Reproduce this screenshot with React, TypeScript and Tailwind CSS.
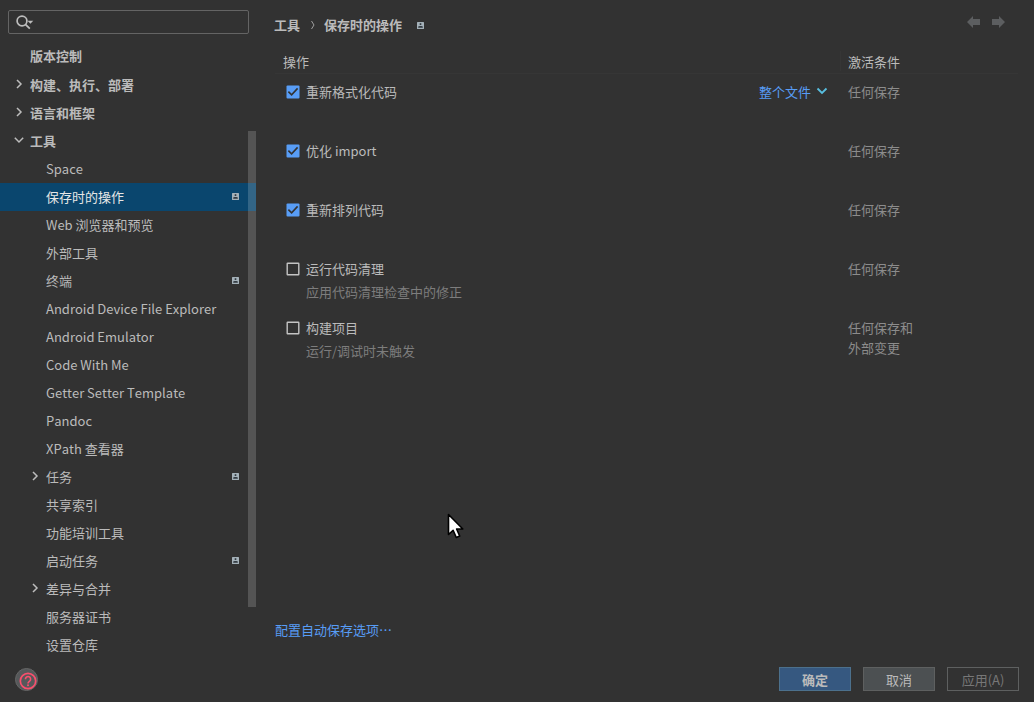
import React, { useState } from "react";
import clsx from "clsx";

interface TreeItem {
  label: string;
  level: number;
  arrow?: "right" | "down";
  project?: boolean;
}

interface SaveAction {
  label: string;
  checked: boolean;
  hint?: string;
  scope?: string;
  trigger: string[];
}

const treeItems: TreeItem[] = [
  { label: "版本控制", level: 0 },
  { label: "构建、执行、部署", level: 0, arrow: "right" },
  { label: "语言和框架", level: 0, arrow: "right" },
  { label: "工具", level: 0, arrow: "down" },
  { label: "Space", level: 1 },
  { label: "保存时的操作", level: 1, project: true },
  { label: "Web 浏览器和预览", level: 1 },
  { label: "外部工具", level: 1 },
  { label: "终端", level: 1, project: true },
  { label: "Android Device File Explorer", level: 1 },
  { label: "Android Emulator", level: 1 },
  { label: "Code With Me", level: 1 },
  { label: "Getter Setter Template", level: 1 },
  { label: "Pandoc", level: 1 },
  { label: "XPath 查看器", level: 1 },
  { label: "任务", level: 1, arrow: "right", project: true },
  { label: "共享索引", level: 1 },
  { label: "功能培训工具", level: 1 },
  { label: "启动任务", level: 1, project: true },
  { label: "差异与合并", level: 1, arrow: "right" },
  { label: "服务器证书", level: 1 },
  { label: "设置仓库", level: 1 },
];

const initialActions: SaveAction[] = [
  { label: "重新格式化代码", checked: true, scope: "整个文件", trigger: ["任何保存"] },
  { label: "优化 import", checked: true, trigger: ["任何保存"] },
  { label: "重新排列代码", checked: true, trigger: ["任何保存"] },
  { label: "运行代码清理", checked: false, hint: "应用代码清理检查中的修正", trigger: ["任何保存"] },
  { label: "构建项目", checked: false, hint: "运行/调试时未触发", trigger: ["任何保存和", "外部变更"] },
];

function ProjectIcon() {
  return (
    <svg width="7" height="7" viewBox="0 0 7 7" className="mb-px shrink-0">
      <rect width="7" height="7" rx="0.5" fill="#a4b1b9" />
      <rect x="2.7" y="1.2" width="1.6" height="1.8" fill="#323a40" />
      <path d="M1.2 5.8V4.6L2.6 4h1.8l1.4.6v1.2z" fill="#323a40" />
    </svg>
  );
}

function Arrow({ direction }: { direction: "right" | "down" }) {
  return (
    <svg width="12" height="12" viewBox="0 0 12 12" fill="none" stroke="#bdbdbd" strokeWidth="1.5">
      {direction === "right" ? <path d="M4 2l4 4-4 4" /> : <path d="M1.8 3.8L6 8l4.2-4.2" />}
    </svg>
  );
}

function Checkbox({ checked, onClick }: { checked: boolean; onClick: () => void }) {
  return (
    <button onClick={onClick} className="h-[14px] w-[14px] shrink-0">
      <svg width="14" height="14" viewBox="0 0 14 14" fill="none">
        {checked ? (
          <>
            <rect x="0.5" y="0.5" width="13" height="13" rx="1" fill="#589df6" />
            <path d="M2.4 6.6l3.2 3.2 6-6.4" stroke="#323232" strokeWidth="1.6" />
          </>
        ) : (
          <rect x="1.2" y="1.2" width="11.6" height="11.6" rx="0.5" stroke="#c4c4c4" strokeWidth="1.4" />
        )}
      </svg>
    </button>
  );
}

function SearchField() {
  return (
    <div className="mx-2 mt-[10px] flex h-6 w-[241px] shrink-0 items-center rounded-[2px] border border-[#646464] pl-[7px]">
      <svg width="18" height="16" viewBox="0 0 18 16" fill="none" className="mb-px">
        <circle cx="6" cy="7" r="4.9" stroke="#bdbdbd" strokeWidth="1.7" />
        <path d="M9.4 10.4l4.4 4.2" stroke="#bdbdbd" strokeWidth="1.8" />
        <path d="M11.5 6.8h5.8l-2.9 2.9z" fill="#bdbdbd" />
      </svg>
    </div>
  );
}

function Sidebar() {
  const [selected, setSelected] = useState("保存时的操作");

  return (
    <div className="flex h-[659px] w-64 shrink-0 flex-col">
      <SearchField />
      <div className="relative mt-[9px]">
        {treeItems.map((item) => (
          <div
            key={item.label}
            onClick={() => setSelected(item.label)}
            className={clsx(
              "flex h-7 items-center pr-[17px] first:pb-0.5",
              item.level === 0 ? "pl-[13px] font-semibold" : "pl-[29px]",
              selected === item.label && "bg-[#0a466e] text-[#e6e6e6]"
            )}
          >
            <span className="mr-[3px] h-[14px] w-[14px] shrink-0">
              {item.arrow && <Arrow direction={item.arrow} />}
            </span>
            <span className="flex-1 whitespace-nowrap">{item.label}</span>
            {item.project && <ProjectIcon />}
          </div>
        ))}
        <div className="absolute top-[88px] right-0 h-[476px] w-2 bg-white/17" />
      </div>
    </div>
  );
}

function Breadcrumbs() {
  return (
    <div className="flex h-[51px] items-center pl-[18px] font-semibold">
      <span className="mb-[2px]">工具</span>
      <svg width="6" height="10" viewBox="0 0 6 10" fill="none" stroke="#a0a0a0" className="mr-2 mb-px ml-[10px]">
        <path d="M1.5 1l2.5 4-2.5 4" />
      </svg>
      <span className="mr-[15px] mb-[2px]">保存时的操作</span>
      <ProjectIcon />
      <div className="mr-[29px] mb-[7px] ml-auto flex gap-3 text-[#5c5e60]">
        <svg width="13" height="12" viewBox="0 0 13 12" fill="currentColor">
          <path d="M0 6l6-6v3h7v6H6v3z" />
        </svg>
        <svg width="13" height="12" viewBox="0 0 13 12" fill="currentColor">
          <path d="M13 6L7 0v3H0v6h7v3z" />
        </svg>
      </div>
    </div>
  );
}

function ActionTable() {
  const [actions, setActions] = useState(initialActions);

  const toggle = (index: number) => {
    setActions((prev) => prev.map((a, i) => (i === index ? { ...a, checked: !a.checked } : a)));
  };

  return (
    <div className="mr-4 ml-[19px]">
      <div className="flex h-[23px] items-start border-b border-[#363636]">
        <div className="h-5 flex-1 border-r border-[#363636] pl-2 leading-[22px]">操作</div>
        <div className="w-[177px] pl-[7px] leading-[22px]">激活条件</div>
      </div>
      {actions.map((action, index) => (
        <div key={action.label} className="flex h-[59px] pt-2 leading-5">
          <div className="flex-1 pl-[11px]">
            <div className="flex items-center">
              <Checkbox checked={action.checked} onClick={() => toggle(index)} />
              <span className="ml-[6px]">{action.label}</span>
              {action.scope && (
                <div className="mr-[13px] ml-auto flex items-center text-[#589df6]">
                  <span>{action.scope}</span>
                  <svg width="12" height="8" viewBox="0 0 12 8" fill="none" className="mb-[2px] ml-[5px]">
                    <path d="M1.5 1.5L6 6l4.5-4.5" stroke="#58bfe0" strokeWidth="1.8" />
                  </svg>
                </div>
              )}
            </div>
            {action.hint && <div className="mt-[3px] pl-5 text-[#7d7d7d]">{action.hint}</div>}
          </div>
          <div className="w-[177px] pl-[7px] text-[#8c8c8c]">
            {action.trigger.map((line) => (
              <div key={line}>{line}</div>
            ))}
          </div>
        </div>
      ))}
    </div>
  );
}

function Footer() {
  return (
    <div className="flex h-[43px] items-start pr-[15px] pl-[15px]">
      <svg width="24" height="24" viewBox="0 0 24 24" fill="none" className="mt-[9px]">
        <circle cx="11.5" cy="11.5" r="11" fill="#55585a" stroke="#666666" />
        <circle cx="13" cy="13" r="7.7" stroke="#f94f6d" strokeWidth="1.7" />
        <path d="M10.4 11.2a2.6 2.6 0 1 1 4.2 2c-1 .8-1.6 1-1.6 2.2" stroke="#f94f6d" strokeWidth="1.6" />
        <circle cx="13" cy="17.2" r="1" fill="#f94f6d" />
      </svg>
      <div className="mt-2 ml-auto flex gap-3">
        <button className="h-6 w-[72px] border border-[#4c708c] bg-[#365880] pt-px font-semibold">确定</button>
        <button className="h-6 w-[72px] border border-[#5e6060] bg-[#4c5052] pt-px">取消</button>
        <button className="h-6 w-[72px] border border-[#5e6060] pt-px text-[#777777]">应用(A)</button>
      </div>
    </div>
  );
}

function App() {
  return (
    <div className="relative h-[702px] w-[1034px] overflow-hidden bg-[#323232] font-['Noto_Sans_CJK_SC',sans-serif] text-[13px] leading-5 text-[#bbbbbb] [font-kerning:none]">
      <div className="flex h-[659px]">
        <Sidebar />
        <div className="flex flex-1 flex-col">
          <Breadcrumbs />
          <ActionTable />
          <a className="mt-auto mb-[19px] ml-[19px] text-[#589df6]">配置自动保存选项⋯</a>
        </div>
      </div>
      <Footer />
      <svg width="18" height="27" viewBox="0 0 18 27" className="absolute top-[513px] left-[447px]">
        <path
          d="M1.5 1.5v20l4.6-4.2 3.2 7.2 3.4-1.5-3.1-7h6.2z"
          fill="#ffffff"
          stroke="#000000"
          strokeWidth="1.6"
          strokeLinejoin="round"
        />
      </svg>
    </div>
  );
}

export default App;
